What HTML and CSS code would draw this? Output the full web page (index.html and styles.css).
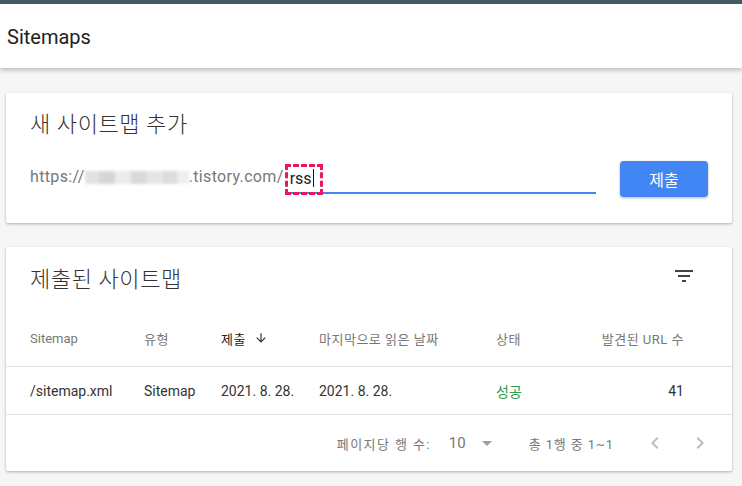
FILE: index.html
```html
<!DOCTYPE html>
<html lang="ko">
<head>
  <meta charset="UTF-8" />
  <meta name="viewport" content="width=device-width, initial-scale=1.0" />
  <title>Sitemaps</title>
  <link rel="stylesheet" href="styles.css">
</head>
<body>
  <div class="topline"></div>
  <header>
    <h1>Sitemaps</h1>
  </header>

  <div class="container">
    <div class="card add-card">
      <h2>새 사이트맵 추가</h2>
      <div class="add-row">
        <span class="prefix">https://<span class="blurred"></span>.tistory.com/</span>
        <div class="field">
          <span class="value">rss</span><span class="caret"></span>
          <span class="mark"></span>
        </div>
        <button class="submit">제출</button>
      </div>
    </div>

    <div class="card list-card">
      <div class="list-head">
        <h2>제출된 사이트맵</h2>
        <svg class="filter" width="24" height="24" viewBox="0 0 24 24"><path d="M3 6h18v2H3zM6 11h12v2H6zM10 16h4v2h-4z" fill="#444"/></svg>
      </div>

      <div class="row head">
        <span>Sitemap</span>
        <span class="ko">유형</span>
        <span class="sorted ko">제출
          <svg width="14" height="14" viewBox="0 0 24 24"><path d="M20 12l-1.41-1.41L13 16.17V4h-2v12.17l-5.58-5.59L4 12l8 8 8-8z" fill="#333"/></svg>
        </span>
        <span class="ko">마지막으로 읽은 날짜</span>
        <span class="ko">상태</span>
        <span class="num ko">발견된 URL 수</span>
      </div>

      <div class="row data">
        <span>/sitemap.xml</span>
        <span>Sitemap</span>
        <span>2021. 8. 28.</span>
        <span>2021. 8. 28.</span>
        <span class="ok">성공</span>
        <span class="num">41</span>
      </div>

      <div class="pager">
        <span class="ko wide">페이지당 행 수:</span>
        <span class="per-page">10 <svg width="10" height="5" viewBox="0 0 10 5"><path d="M0 0h10L5 5z" fill="#9e9e9e"/></svg></span>
        <span class="count ko">총 1행 중 1~1</span>
        <span class="nav">
          <svg width="24" height="24" viewBox="0 0 24 24"><path d="M15.41 7.41L14 6l-6 6 6 6 1.41-1.41L10.83 12z" fill="#bdbdbd"/></svg>
          <svg width="24" height="24" viewBox="0 0 24 24"><path d="M8.59 16.59L10 18l6-6-6-6-1.41 1.41L13.17 12z" fill="#bdbdbd"/></svg>
        </span>
      </div>
    </div>
  </div>
</body>
</html>
```

FILE: styles.css
```css
body {
  margin: 0;
  font-family: Roboto, "Noto Sans CJK KR", sans-serif;
  background-color: #f6f6f6;
  color: #333;
}
.topline {
  height: 4px;
  background-color: #455a64;
}
header {
  height: 64px;
  background: white;
  display: flex;
  align-items: center;
  padding-left: 7px;
  box-shadow: 0 2px 5px rgba(0,0,0,0.25);
  position: relative;
}
header h1 {
  margin: 2px 0 0;
  font-size: 20px;
  font-weight: 400;
  color: #222;
}
.container {
  padding: 25px 10px 14px 6px;
}
.card {
  background: white;
  border-radius: 2px;
  box-shadow: 0 1px 3px rgba(0,0,0,0.3);
}
.card h2 {
  margin: 0;
  font-size: 22px;
  font-weight: 300;
  letter-spacing: 0.6px;
  line-height: 28px;
  color: #333;
}
.add-card {
  height: 130px;
  box-sizing: border-box;
  padding: 18px 24px 0 24px;
}
.add-row {
  display: flex;
  align-items: center;
  margin-top: 22px;
}
.prefix {
  font-size: 16px;
  letter-spacing: 0.35px;
  color: #777;
  display: flex;
  align-items: center;
  padding-bottom: 6px;
}
.blurred {
  display: inline-block;
  width: 104px;
  height: 13px;
  margin-top: 2px;
  background: linear-gradient(90deg, #e2e2e2 0 14px, #d6d6d6 14px 30px, #ececec 30px 46px, #d9d9d9 46px 62px, #e6e6e6 62px 78px, #dcdcdc 78px 92px, #efefef 92px);
  filter: blur(1.5px);
}
.field {
  flex: 1;
  position: relative;
  height: 28px;
  margin-left: 1px;
  padding-left: 5px;
  border-bottom: 2px solid #4285f4;
  margin-right: 24px;
  display: flex;
  align-items: center;
  font-size: 16px;
  color: #222;
}
.caret {
  display: inline-block;
  width: 1px;
  height: 18px;
  background: #111;
  margin-left: 1px;
}
.mark {
  position: absolute;
  left: 0;
  top: 0;
  width: 32px;
  height: 25px;
  border: 3px dashed #e5195e;
}
.submit {
  width: 88px;
  height: 36px;
  background-color: #4285f4;
  color: white;
  border: none;
  border-radius: 4px;
  font-family: inherit;
  font-size: 16px;
  box-shadow: 0 1px 3px rgba(0,0,0,0.3);
}
.list-card {
  margin-top: 24px;
}
.list-head {
  display: flex;
  justify-content: space-between;
  align-items: center;
  padding: 19px 36px 0 24px;
}
.list-head .filter {
  margin-top: -9px;
}
.row {
  display: grid;
  grid-template-columns: 114px 77px 98px 177px 1fr auto;
  align-items: center;
  padding: 0 48px 0 24px;
  border-bottom: 1px solid #e0e0e0;
}
.row.head {
  height: 56px;
  margin-top: 16px;
  font-size: 13px;
  color: #777;
}
.ko {
  letter-spacing: 0.5px;
}
.row.head .sorted {
  color: #222;
  display: flex;
  align-items: center;
  gap: 8px;
}
.row.data {
  height: 47px;
  font-size: 14px;
  color: #333;
}
.num {
  text-align: right;
}
.ok {
  color: #2e9a52;
}
.pager {
  height: 56px;
  display: flex;
  justify-content: flex-end;
  align-items: center;
  padding-right: 20px;
  font-size: 13px;
  color: #777;
}
.pager .wide {
  letter-spacing: 1.4px;
}
.pager .count {
  letter-spacing: 0.9px;
}
.per-page {
  display: flex;
  align-items: center;
  gap: 16px;
  margin-left: 18px;
  font-size: 15px;
}
.count {
  margin-left: 37px;
}
.nav {
  display: flex;
  gap: 21px;
  margin-left: 29px;
}
```
